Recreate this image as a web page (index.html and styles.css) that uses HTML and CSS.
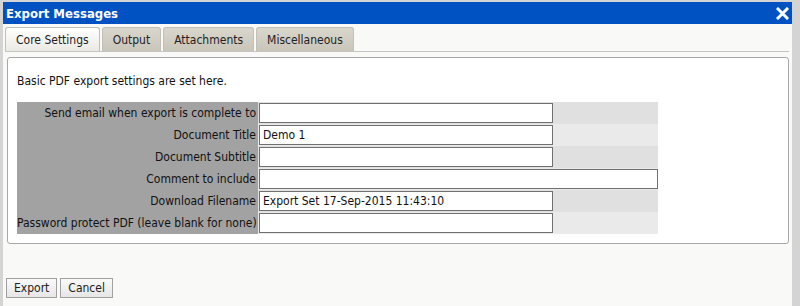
FILE: index.html
```html
<!DOCTYPE html>
<html lang="en">
<head>
    <meta charset="UTF-8">
    <title>Export Messages</title>
    <link rel="stylesheet" href="styles.css">
</head>
<body>
    <div class="window">
        <div class="titlebar">
            <span class="title">Export Messages</span>
            <svg class="close" width="13" height="13" viewBox="0 0 13 13">
                <path d="M2 2 L11 11 M11 2 L2 11" stroke="#fff" stroke-width="3" stroke-linecap="square"/>
            </svg>
        </div>
        <div class="dialog-body">
            <div class="tabs">
                <div class="tab active">Core Settings</div>
                <div class="tab">Output</div>
                <div class="tab">Attachments</div>
                <div class="tab">Miscellaneous</div>
            </div>
            <div class="panel">
                <p class="intro">Basic PDF export settings are set here.</p>
                <table class="settings">
                    <tr class="odd">
                        <td class="label">Send email when export is complete to</td>
                        <td><input type="text" class="field"></td>
                    </tr>
                    <tr class="even">
                        <td class="label">Document Title</td>
                        <td><input type="text" class="field" value="Demo 1"></td>
                    </tr>
                    <tr class="odd">
                        <td class="label">Document Subtitle</td>
                        <td><input type="text" class="field"></td>
                    </tr>
                    <tr class="even">
                        <td class="label">Comment to include</td>
                        <td><input type="text" class="field wide"></td>
                    </tr>
                    <tr class="odd">
                        <td class="label">Download Filename</td>
                        <td><input type="text" class="field" value="Export Set 17-Sep-2015 11:43:10"></td>
                    </tr>
                    <tr class="even">
                        <td class="label">Password protect PDF (leave blank for none)</td>
                        <td><input type="text" class="field"></td>
                    </tr>
                </table>
            </div>
            <div class="actions">
                <button>Export</button>
                <button>Cancel</button>
            </div>
        </div>
    </div>
</body>
</html>
```

FILE: styles.css
```css
html, body {
    margin: 0;
    padding: 0;
}
body {
    font-family: "DejaVu Sans Condensed", "DejaVu Sans", sans-serif;
    font-size: 11px;
    color: #111;
    background-color: #d4d4d4;
}
.window {
    width: 789px;
    height: 304px;
    margin: 2px 0 0 3px;
    display: flex;
    flex-direction: column;
}
.titlebar {
    height: 22px;
    background-color: #0052c2;
    display: flex;
    align-items: center;
    justify-content: space-between;
    padding: 0 3px 0 3px;
}
.title {
    color: #fff;
    font-weight: bold;
    font-size: 13px;
}
.dialog-body {
    flex: 1;
    background-color: #f9f9f7;
    padding: 3px 0 0 2px;
}
.tabs {
    display: flex;
    gap: 2px;
    height: 24px;
    border-bottom: 1px solid #c4c4c4;
    margin-right: 3px;
}
.tab {
    padding: 0 10px;
    line-height: 24px;
    font-size: 12px;
    background: linear-gradient(#d9d6cd, #c9c5b9);
    border: 1px solid #c2bfb6;
    border-bottom: none;
    border-radius: 3px 3px 0 0;
    color: #222;
}
.tab.active {
    background: linear-gradient(#ffffff, #ebe9e3);
}
.panel {
    margin: 5px 3px 0 2px;
    height: 185px;
    background-color: #fff;
    border: 1px solid #a8a8a8;
    border-radius: 3px;
    padding: 0 9px;
}
.intro {
    margin: 16px 0 14px 0;
    font-size: 12px;
}
.settings {
    border-collapse: collapse;
    table-layout: fixed;
    width: 641px;
}
.settings td {
    padding: 0;
    height: 22px;
}
.settings .label {
    width: 239px;
    text-align: right;
    background-color: #a2a2a2;
    padding-right: 2px;
    font-size: 12px;
    white-space: nowrap;
}
.odd td {
    background-color: #e0e0e0;
}
.even td {
    background-color: #eaeaea;
}
.field {
    display: block;
    box-sizing: border-box;
    width: 294px;
    height: 20px;
    margin: 0 0 0 1px;
    border: 1px solid #707070;
    padding: 0 3px;
    font-family: inherit;
    font-size: 12px;
    color: #111;
    background-color: #fff;
}
.field.wide {
    width: 399px;
}
.actions {
    display: flex;
    gap: 3px;
    margin-top: 34px;
    padding-left: 1px;
}
button {
    height: 20px;
    padding: 0 7px;
    font-family: inherit;
    font-size: 12px;
    color: #222;
    background: linear-gradient(#fafafa, #e6e6e6);
    border: 1px solid #a0a0a0;
}
```
